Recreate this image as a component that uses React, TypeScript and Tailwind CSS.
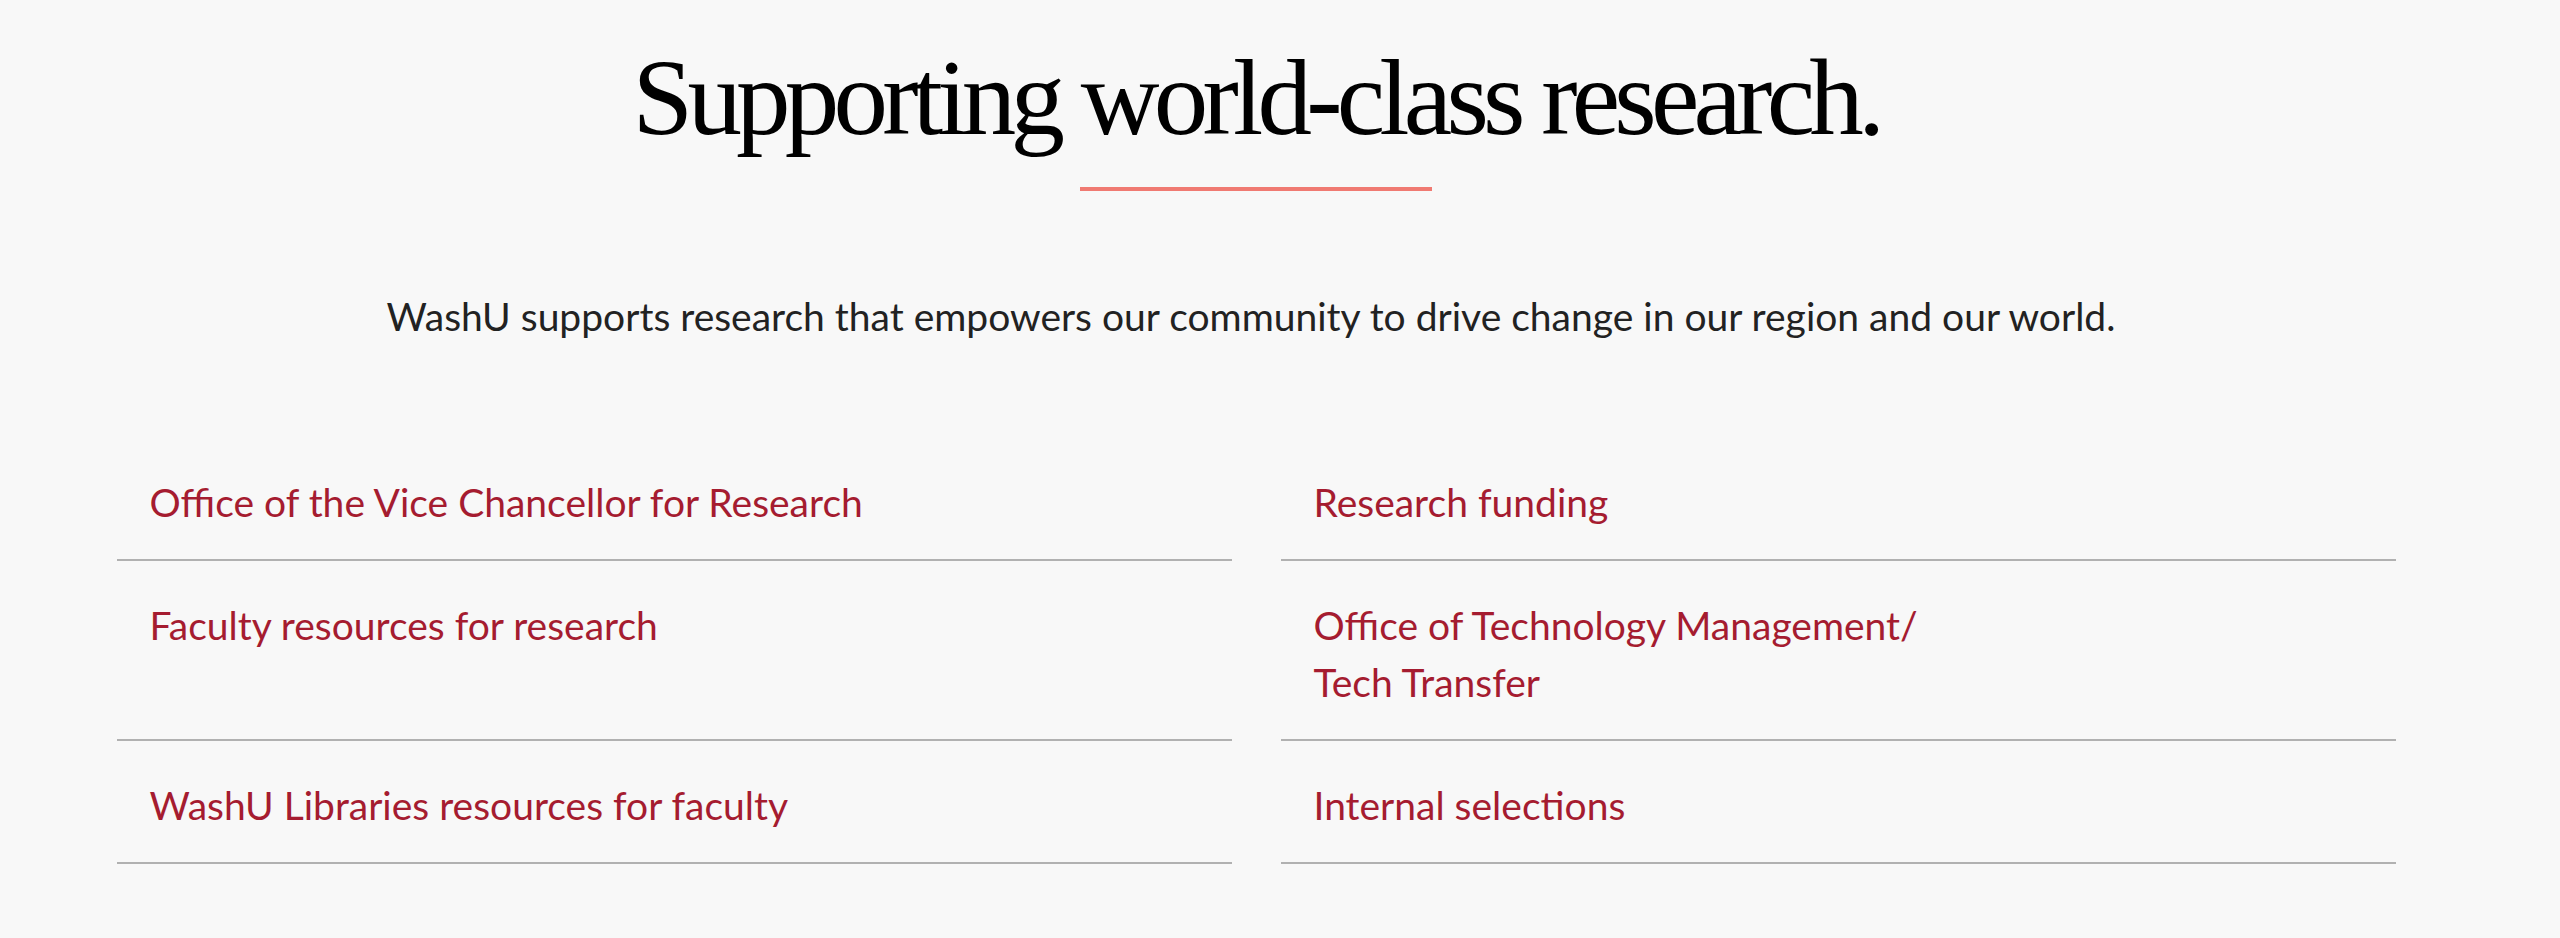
const links: string[][] = [
  ['Office of the Vice Chancellor for Research', 'Research funding'],
  ['Faculty resources for research', 'Office of Technology Management/\nTech Transfer'],
  ['WashU Libraries resources for faculty', 'Internal selections'],
];

const App = () => {
  return (
    <div className="min-h-screen bg-[#f8f8f8] pr-12 pb-20">
      {/* Heading */}
      <div className="flex flex-col items-center pt-[38px]">
        <h1 className="font-['Liberation_Serif',serif] text-[109px] leading-[1.1] tracking-[-0.053em] text-black">
          Supporting world-class research.
        </h1>
        <div className="mt-[29px] h-[4px] w-[352px] bg-[#f07a72]" />
        <p className="mt-[96px] mr-[10px] font-['Lato',sans-serif] text-[39px] leading-[1.5] text-[#222]">
          WashU supports research that empowers our community to drive change in our region and our world.
        </p>
      </div>

      {/* Links */}
      <div className="mx-auto mt-[93px] grid w-[2279px] grid-cols-2 gap-x-[49px]">
        {links.flat().map((label) => (
          <a
            key={label}
            href="#"
            className="block whitespace-pre-line border-b-2 border-[#b1b1b1] px-[33px] pt-[36px] pb-[28px] font-['Lato',sans-serif] text-[39px] leading-[57px] text-[#a51c30]"
          >
            {label}
          </a>
        ))}
      </div>
    </div>
  );
};

export default App;
